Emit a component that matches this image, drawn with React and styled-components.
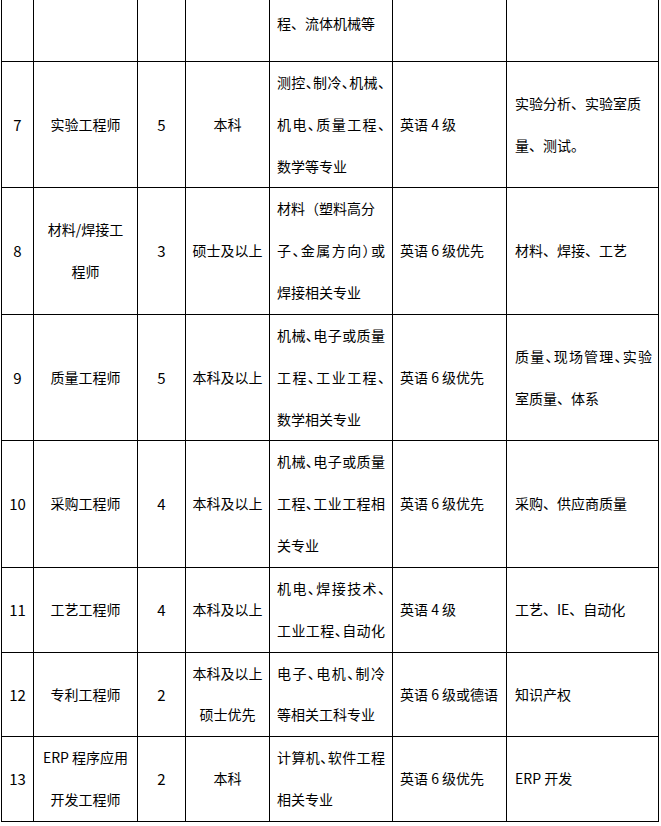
import React from "react";
import styled, { createGlobalStyle, css } from "styled-components";

const Global = createGlobalStyle`
  html, body {
    margin: 0;
    padding: 0;
    background: #ffffff;
  }
  body {
    font-family: "Noto Sans CJK SC", "Noto Sans", sans-serif;
    font-size: 14px;
    color: #000000;
  }
`;

const Grid = styled.div`
  display: grid;
  grid-template-columns: 32px 104px 48px 84px 123px 114px 152px;
  margin-left: 1px;
  width: 658px;
  border-left: 1px solid #000;
`;

const Cell = styled.div`
  box-sizing: border-box;
  border-right: 1px solid #000;
  border-bottom: 1px solid #000;
  display: flex;
  flex-direction: column;
  justify-content: ${(p) => (p.$top ? "flex-start" : "center")};
  text-align: ${(p) => (p.$left ? "left" : "center")};
  padding: ${(p) => p.$pad || "0"};
  padding-top: ${(p) => (p.$top ? "3px" : "0")};
  min-height: ${(p) => (p.$top ? "62px" : "0")};
  font-size: ${(p) => (p.$num ? "15px" : "14px")};
  line-height: 41.83px;
  min-width: 0;
`;

const Line = styled.span`
  display: block;
  white-space: nowrap;
  ${(p) =>
    p.$fit &&
    css`
      white-space: normal;
      font-feature-settings: "halt" 1;
      text-align: justify;
      text-align-last: justify;
    `}
`;

const fit = (t) => ({ t, fit: true });

const rows = [
  {
    top: true,
    no: "",
    title: [],
    count: "",
    edu: [],
    major: ["程、流体机械等"],
    lang: [],
    dir: [],
  },
  {
    no: "7",
    title: ["实验工程师"],
    count: "5",
    edu: ["本科"],
    major: [fit("测控、制冷、机械、"), fit("机电、质量工程、"), "数学等专业"],
    lang: ["英语 4 级"],
    dir: ["实验分析、实验室质", "量、测试。"],
  },
  {
    no: "8",
    title: ["材料/焊接工", "程师"],
    count: "3",
    edu: ["硕士及以上"],
    major: ["材料（塑料高分", fit("子、金属方向）或"), "焊接相关专业"],
    lang: ["英语 6 级优先"],
    dir: ["材料、焊接、工艺"],
  },
  {
    no: "9",
    title: ["质量工程师"],
    count: "5",
    edu: ["本科及以上"],
    major: [fit("机械、电子或质量"), fit("工程、工业工程、"), "数学相关专业"],
    lang: ["英语 6 级优先"],
    dir: [fit("质量、现场管理、实验"), "室质量、体系"],
  },
  {
    no: "10",
    title: ["采购工程师"],
    count: "4",
    edu: ["本科及以上"],
    major: [fit("机械、电子或质量"), fit("工程、工业工程相"), "关专业"],
    lang: ["英语 6 级优先"],
    dir: ["采购、供应商质量"],
  },
  {
    no: "11",
    title: ["工艺工程师"],
    count: "4",
    edu: ["本科及以上"],
    major: [fit("机电、焊接技术、"), fit("工业工程、自动化")],
    lang: ["英语 4 级"],
    dir: ["工艺、IE、自动化"],
  },
  {
    no: "12",
    title: ["专利工程师"],
    count: "2",
    edu: ["本科及以上", "硕士优先"],
    major: [fit("电子、电机、制冷"), "等相关工科专业"],
    lang: ["英语 6 级或德语"],
    dir: ["知识产权"],
  },
  {
    no: "13",
    title: ["ERP 程序应用", "开发工程师"],
    count: "2",
    edu: ["本科"],
    major: [fit("计算机、软件工程"), "相关专业"],
    lang: ["英语 6 级优先"],
    dir: ["ERP 开发"],
  },
];

function Lines({ items }) {
  return items.map((it, i) => {
    const isObj = typeof it === "object";
    return (
      <Line key={i} $fit={isObj && it.fit}>
        {isObj ? it.t : it}
      </Line>
    );
  });
}

export default function App() {
  return (
    <>
      <Global />
      <Grid>
        {rows.map((r, i) => (
          <React.Fragment key={i}>
            <Cell $top={r.top} $num>
              {r.no && <Line>{r.no}</Line>}
            </Cell>
            <Cell $top={r.top}>
              <Lines items={r.title} />
            </Cell>
            <Cell $top={r.top} $num>
              {r.count && <Line>{r.count}</Line>}
            </Cell>
            <Cell $top={r.top}>
              <Lines items={r.edu} />
            </Cell>
            <Cell $top={r.top} $left $pad="0 7px">
              <Lines items={r.major} />
            </Cell>
            <Cell $top={r.top} $left $pad="0 6px 0 7px">
              <Lines items={r.lang} />
            </Cell>
            <Cell $top={r.top} $left $pad="0 6px 0 8px">
              <Lines items={r.dir} />
            </Cell>
          </React.Fragment>
        ))}
      </Grid>
    </>
  );
}
